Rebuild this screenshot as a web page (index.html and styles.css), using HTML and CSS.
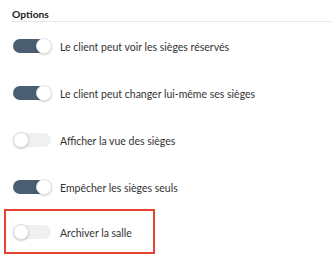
FILE: index.html
```html
<!DOCTYPE html>
<html lang="fr">
<head>
<meta charset="utf-8">
<link rel="stylesheet" href="styles.css">
</head>
<body>
<div class="panel">
  <div class="title">Options</div>
  <div class="row"><span class="toggle on"><span class="knob"></span></span><span class="label">Le client peut voir les sièges réservés</span></div>
  <div class="row"><span class="toggle on"><span class="knob"></span></span><span class="label">Le client peut changer lui-même ses sièges</span></div>
  <div class="row"><span class="toggle"><span class="knob"></span></span><span class="label">Afficher la vue des sièges</span></div>
  <div class="row"><span class="toggle on"><span class="knob"></span></span><span class="label">Empêcher les sièges seuls</span></div>
  <div class="row highlight"><span class="toggle"><span class="knob"></span></span><span class="label">Archiver la salle</span></div>
</div>
</body>
</html>
```
FILE: styles.css
```css
html, body {
  margin: 0;
  padding: 0;
  background: #fff;
}
body {
  font-family: Lato, "Open Sans", sans-serif;
  color: #333;
  width: 331px;
  height: 262px;
  overflow: hidden;
}
.panel {
  padding-left: 12px;
}
.title {
  font-weight: bold;
  font-size: 10.3px;
  color: #222;
  height: 21px;
  line-height: 28px;
  border-bottom: 1px solid #e8e8e8;
}
.row {
  display: flex;
  align-items: center;
  height: 47px;
  gap: 9px;
  padding-left: 1px;
}
.row.highlight {
  box-sizing: border-box;
  width: 151px;
  height: 45px;
  margin-left: -8px;
  margin-top: -1px;
  padding-left: 7px;
  border: 2px solid #e5432f;
}
.toggle {
  position: relative;
  flex: none;
  width: 38px;
  height: 14px;
  border-radius: 7px;
  background: #f0f0f0;
}
.toggle.on {
  background: #4a5d71;
}
.knob {
  position: absolute;
  top: -1px;
  left: 0;
  width: 14px;
  height: 14px;
  border-radius: 50%;
  background: #fff;
  border: 1px solid #ddd;
  box-shadow: 0 1px 2px rgba(0,0,0,0.18);
}
.toggle.on .knob {
  left: auto;
  right: -1px;
  border-color: #e4e4e4;
}
.label {
  font-size: 10.5px;
  white-space: nowrap;
  padding-top: 2px;
}
```
